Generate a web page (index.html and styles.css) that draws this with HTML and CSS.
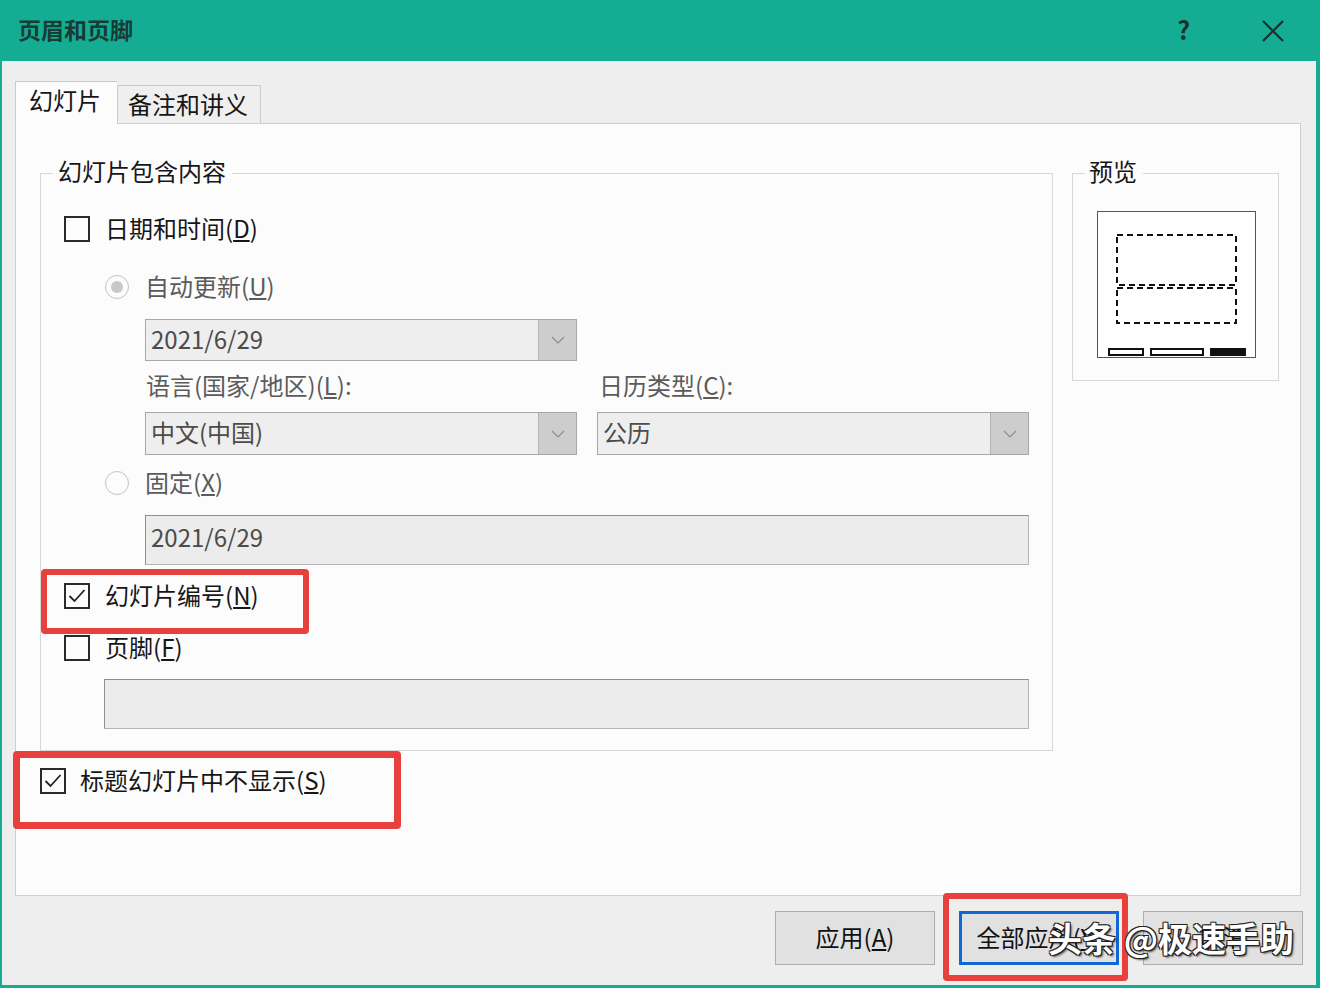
FILE: index.html
```html
<!DOCTYPE html>
<html lang="zh-CN">
<head>
    <meta charset="UTF-8">
    <title>页眉和页脚</title>
    <link rel="stylesheet" href="styles.css">
</head>
<body>
    <div class="dialog">
        <div class="titlebar">
            <span class="title">页眉和页脚</span>
            <span class="help">?</span>
            <span class="close">
                <svg width="22" height="22" viewBox="0 0 22 22"><path d="M1 1 L21 21 M21 1 L1 21" stroke="#1b2f2c" stroke-width="2.2" fill="none"/></svg>
            </span>
        </div>

        <div class="body">
            <div class="tabs">
                <div class="tab active">幻灯片</div>
                <div class="tab">备注和讲义</div>
            </div>

            <div class="panel">
                <div class="panel-top">
                    <div class="group main-group">
                        <div class="legend">幻灯片包含内容</div>

                        <div class="row row-date">
                            <span class="box"></span>
                            <span class="text">日期和时间(<u>D</u>)</span>
                        </div>
                        <div class="row row-auto disabled">
                            <span class="radio on"></span>
                            <span class="text">自动更新(<u>U</u>)</span>
                        </div>
                        <div class="select select-date">
                            <span class="value">2021/6/29</span>
                            <span class="arrow"><svg width="14" height="8" viewBox="0 0 14 8"><path d="M1 1 L7 7 L13 1" stroke="#8c8c8c" stroke-width="1.2" fill="none"/></svg></span>
                        </div>
                        <div class="labels disabled">
                            <span>语言(国家/地区)(<u>L</u>):</span>
                            <span>日历类型(<u>C</u>):</span>
                        </div>
                        <div class="selects">
                            <div class="select">
                                <span class="value">中文(中国)</span>
                                <span class="arrow"><svg width="14" height="8" viewBox="0 0 14 8"><path d="M1 1 L7 7 L13 1" stroke="#8c8c8c" stroke-width="1.2" fill="none"/></svg></span>
                            </div>
                            <div class="select">
                                <span class="value">公历</span>
                                <span class="arrow"><svg width="14" height="8" viewBox="0 0 14 8"><path d="M1 1 L7 7 L13 1" stroke="#8c8c8c" stroke-width="1.2" fill="none"/></svg></span>
                            </div>
                        </div>
                        <div class="row row-fixed disabled">
                            <span class="radio"></span>
                            <span class="text">固定(<u>X</u>)</span>
                        </div>
                        <div class="field field-fixed">2021/6/29</div>

                        <div class="row row-number">
                            <span class="box checked"><svg width="22" height="22" viewBox="0 0 22 22"><path d="M3.5 11 L8.5 16 L18.5 5" stroke="#222" stroke-width="1.8" fill="none"/></svg></span>
                            <span class="text">幻灯片编号(<u>N</u>)</span>
                        </div>
                        <div class="row row-footer">
                            <span class="box"></span>
                            <span class="text">页脚(<u>F</u>)</span>
                        </div>
                        <div class="field field-footer"></div>
                    </div>

                    <div class="group preview-group">
                        <div class="legend">预览</div>
                        <svg class="paper" width="160" height="148" viewBox="0 0 160 148">
                            <rect x="0.5" y="0.5" width="158" height="146" fill="#fff" stroke="#555"/>
                            <rect x="20" y="24" width="119" height="50" fill="none" stroke="#111" stroke-width="2" stroke-dasharray="6 4"/>
                            <rect x="20" y="77" width="119" height="35" fill="none" stroke="#111" stroke-width="2" stroke-dasharray="6 4"/>
                            <rect x="12" y="138" width="34" height="6" fill="#fff" stroke="#111" stroke-width="2"/>
                            <rect x="54" y="138" width="52" height="6" fill="#fff" stroke="#111" stroke-width="2"/>
                            <rect x="113" y="137" width="36" height="8" fill="#111"/>
                        </svg>
                    </div>
                </div>

                <div class="row row-title">
                    <span class="box checked"><svg width="22" height="22" viewBox="0 0 22 22"><path d="M3.5 11 L8.5 16 L18.5 5" stroke="#222" stroke-width="1.8" fill="none"/></svg></span>
                    <span class="text">标题幻灯片中不显示(<u>S</u>)</span>
                </div>
            </div>

            <div class="buttons">
                <button class="btn">应用(<u>A</u>)</button>
                <button class="btn default">全部应用(<u>Y</u>)</button>
                <button class="btn">取消</button>
            </div>
        </div>

        <!-- annotations drawn over the dialog -->
        <div class="mark mark-number"></div>
        <div class="mark mark-title"></div>
        <div class="mark mark-apply"></div>
        <div class="watermark">头条 @极速手助</div>
    </div>
</body>
</html>
```

FILE: styles.css
```css
* {
    box-sizing: border-box;
}

body {
    margin: 0;
    background: #14ad93;
    font-family: "Noto Sans CJK SC", "Noto Sans", sans-serif;
    font-size: 24px;
    color: #161616;
}

.dialog {
    position: relative;
    width: 1320px;
    height: 988px;
    background: #efeeef;
    border-style: solid;
    border-color: #14ad93;
    border-width: 0 4px 3px 2px;
}

/* title bar */
.titlebar {
    height: 61px;
    background: #14ad93;
    display: flex;
    align-items: center;
    padding: 0 32px 0 16px;
}
.title {
    font-size: 23px;
    font-weight: bold;
    color: #173b35;
    margin-bottom: 4px;
}
.help {
    margin-left: auto;
    font-size: 25px;
    font-weight: bold;
    color: #1b2f2c;
    margin-right: 72px;
    margin-bottom: 3px;
}
.close {
    display: flex;
}

.body {
    padding: 20px 0 0 13px;
}

/* tabs */
.tabs {
    display: flex;
    align-items: flex-end;
    height: 42px;
}
.tab {
    height: 38px;
    width: 144px;
    border: 1px solid #cbcbcb;
    border-bottom: none;
    background: #efefef;
    padding-left: 10px;
    line-height: 35px;
}
.tab.active {
    width: 102px;
    height: 43px;
    margin-bottom: -1px;
    background: #fdfcfd;
    padding-left: 13px;
    line-height: 36px;
    position: relative;
    z-index: 1;
    border-right: none;
}

.panel {
    width: 1286px;
    height: 773px;
    background: #fdfcfd;
    border: 1px solid #cfcfcf;
    padding: 49px 0 0 24px;
}

.panel-top {
    display: flex;
    align-items: flex-start;
    gap: 19px;
}

.group {
    border: 1px solid #d7d7d7;
}
.legend {
    width: fit-content;
    margin: -17px 0 0 12px;
    padding: 0 6px 4px 5px;
    line-height: 28px;
    background: #fdfcfd;
}
.main-group {
    width: 1013px;
    padding-bottom: 21px;
}
.preview-group {
    width: 207px;
    padding-bottom: 21px;
}
.preview-group .legend {
    padding-left: 4px;
}
.paper {
    display: block;
    margin: 22px 0 0 24px;
}

/* rows */
.row {
    display: flex;
    align-items: center;
    height: 32px;
}
.row .text {
    margin-top: -4px;
}
.disabled {
    color: #5b5b5b;
}
.box {
    width: 26px;
    height: 26px;
    border: 2px solid #2a2a2a;
    margin-right: 15px;
    display: flex;
    align-items: center;
    justify-content: center;
}
.radio {
    width: 24px;
    height: 24px;
    border: 1.5px solid #c2c2c2;
    border-radius: 50%;
    margin-right: 16px;
    display: flex;
    align-items: center;
    justify-content: center;
}
.radio.on::after {
    content: "";
    width: 12px;
    height: 12px;
    border-radius: 50%;
    background: #c8c8c8;
}

.row-date {
    margin-top: 24px;
    padding-left: 23px;
}
.row-auto {
    margin-top: 26px;
    padding-left: 64px;
}

.select {
    display: flex;
    width: 432px;
    height: 43px;
    border: 1px solid #a7a7a7;
    background: #eeeeee;
    color: #4b4b4b;
}
.select .value {
    flex: 1;
    padding-left: 5px;
    line-height: 37px;
}
.select .arrow {
    width: 38px;
    background: #cdcdcd;
    border-left: 1px solid #b3b3b3;
    display: flex;
    align-items: center;
    justify-content: center;
}
.select-date {
    margin: 16px 0 0 104px;
    height: 42px;
}

.labels {
    margin: 10px 0 0 105px;
    height: 32px;
    line-height: 28px;
    display: grid;
    grid-template-columns: 453px 432px;
}
.selects {
    margin: 9px 0 0 104px;
    display: flex;
    gap: 20px;
}

.row-fixed {
    margin-top: 12px;
    padding-left: 64px;
}

.field {
    height: 50px;
    background: #ececec;
    border: 1px solid #8f8f8f;
    border-bottom-color: #b5b5b5;
    border-right-color: #b5b5b5;
    color: #4b4b4b;
    padding-left: 5px;
    line-height: 41px;
}
.field-fixed {
    margin: 16px 0 0 104px;
    width: 884px;
}
.row-number {
    margin-top: 15px;
    padding-left: 23px;
}
.row-footer {
    margin-top: 20px;
    padding-left: 23px;
}
.field-footer {
    margin: 15px 0 0 63px;
    width: 925px;
}

.row-title {
    margin-top: 14px;
}
.row-title .box {
    margin-right: 14px;
}

/* bottom buttons */
.buttons {
    display: flex;
    justify-content: flex-end;
    gap: 24px;
    margin-top: 15px;
    padding-right: 13px;
}
.btn {
    width: 160px;
    height: 54px;
    background: #e1e1e1;
    border: 1px solid #adadad;
    font-family: inherit;
    font-size: 24px;
    color: #111;
    padding: 0 0 4px;
}
.btn.default {
    border: 3px solid #1168d3;
}

/* annotations */
.mark {
    position: absolute;
    border: 6px solid #e8403c;
    border-radius: 4px;
}
.mark-number {
    left: 39px;
    top: 569px;
    width: 268px;
    height: 65px;
}
.mark-title {
    left: 11px;
    top: 751px;
    width: 388px;
    height: 78px;
    border-width: 7px;
}
.mark-apply {
    left: 941px;
    top: 893px;
    width: 185px;
    height: 88px;
}
.watermark {
    position: absolute;
    left: 1046px;
    top: 916px;
    font-size: 34px;
    font-weight: bold;
    line-height: 44px;
    color: #fff;
    white-space: nowrap;
    text-shadow: 1px 1px 0 #222, -1px -1px 0 #222, 1px -1px 0 #222, -1px 1px 0 #222, 2px 2px 2px rgba(0, 0, 0, 0.6);
}
```
